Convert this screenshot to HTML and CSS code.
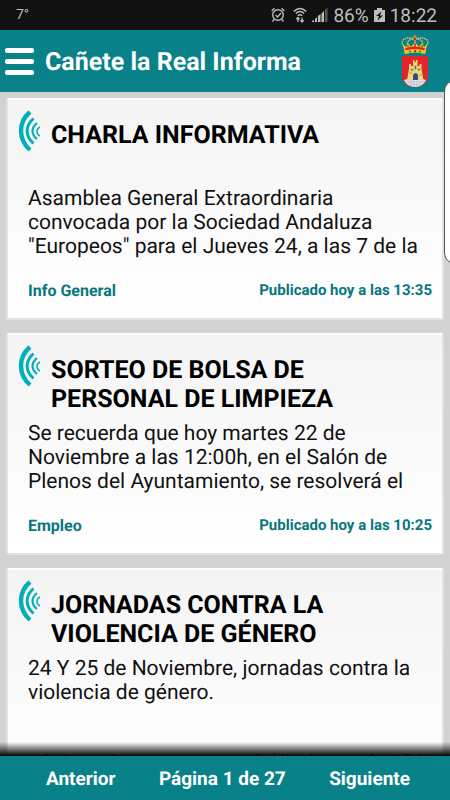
FILE: index.html
```html
<!DOCTYPE html>
<html lang="es">
<head>
    <meta charset="UTF-8">
    <meta name="viewport" content="width=device-width, initial-scale=1.0">
    <title>Cañete la Real Informa</title>
    <link rel="stylesheet" href="styles.css">
</head>
<body>

    <svg width="0" height="0" class="defs" aria-hidden="true">
        <symbol id="waves" viewBox="0 0 24 42">
            <g fill="none" stroke="#00afb9">
                <path d="M12 2C0 12 0 29 12 40" stroke-width="4.4"/>
                <path d="M15.500 8.500C7 16 7 26 15.500 33.500" stroke-width="3"/>
                <path d="M19 13C13 18 13 24 19 29" stroke-width="2.200"/>
                <path d="M22 17C18 19 18 24 22 26" stroke-width="1.500"/>
            </g>
        </symbol>
    </svg>

    <div class="status-bar">
        <span class="temperature">7°</span>
        <div class="status-icons">
            <svg class="icon-alarm" viewBox="0 0 14 16" width="14" height="16" fill="none" stroke="#bdbdbd">
                <circle cx="7" cy="8" r="5.300" stroke-width="1.400"/>
                <path d="M4.500 8l2 2 3.500-4" stroke-width="1.200"/>
                <path d="M.7 4L3.500 1.200M13.300 4L10.500 1.200M3 12.500L1.500 14.500M11 12.500l1.500 2" stroke-width="1.300"/>
            </svg>
            <svg class="icon-wifi" viewBox="0 0 14 16" width="14" height="16" fill="none" stroke="#bdbdbd">
                <path d="M.8 4.500Q7-1.500 13.200 4.500M2.800 6.600Q7 2.500 11.200 6.600M4.800 8.700Q7 6.600 9.200 8.700" stroke-width="1.400"/>
                <path d="M5 15v-4.500M3.300 12.300L5 10.500l1.500 1.800M9 10.500V15M7.500 13.200L9 15l1.700-1.800" stroke-width="1.300"/>
            </svg>
            <svg class="icon-signal" viewBox="0 0 16 16" width="16" height="16" fill="#bdbdbd">
                <path d="M0 15v-1l2-1v2zM3 15v-3l2-2v5zM6 15V9l2.500-2v8zM9.500 15V6.500L12 4v11z"/>
                <path d="M13 15V3l2.500-2.500V15z" fill="#555"/>
            </svg>
            <span>86%</span>
            <svg class="icon-battery" viewBox="0 0 11 16" width="11" height="16">
                <path d="M3 1h5v2h3v12H0V3h3z" fill="#bdbdbd"/>
                <path d="M7.500 4.500L2 9h3l-1.500 4.500L9 8.500H6z" fill="#111"/>
            </svg>
            <span>18:22</span>
        </div>
    </div>

    <header class="header">
        <button class="menu-btn" aria-label="Menú">
            <span></span>
            <span></span>
            <span></span>
        </button>
        <h1>Cañete la Real Informa</h1>
        <svg class="crest" viewBox="0 0 30 54" width="30" height="54" role="img" aria-label="Escudo">
            <path d="M15 1v5M13 3h4" stroke="#d8a52c" stroke-width="1.200"/>
            <circle cx="15" cy="5" r="1.500" fill="#d81f26"/>
            <path d="M4 12C-2 6 7 2 14 5M26 12C32 6 23 2 16 5M8 12C6 8 9 5 14 5M22 12C24 8 21 5 16 5M15 6v7" fill="none" stroke="#dfc779" stroke-width="1.300" stroke-dasharray="1.500 .7"/>
            <path d="M3 11l3 2 2-4 3 4 4-5 4 5 3-4 2 4 3-2-2 8q-10-3-20 0z" fill="#f6cf24"/>
            <path d="M5 14q10-3 20 0l-1 3q-9-3-18 0z" fill="#e2251f"/>
            <path d="M4 17q11-4 22 0l-1 3q-10-3-20 0z" fill="#f4c522"/>
            <path d="M8 11v2M22 11v2M15 9v4" stroke="#e2251f" stroke-width="1.500"/>
            <circle cx="10" cy="17.500" r="1" fill="#168851"/>
            <circle cx="15" cy="17" r="1.200" fill="#d92121"/>
            <circle cx="20" cy="17.500" r="1" fill="#168851"/>
            <path d="M2 22h26v20c0 7-6 11-13 11S2 49 2 42z" fill="#e52529"/>
            <path d="M4 46q11-5 22 0-3 7-11 7T4 46z" fill="#d9dde2"/>
            <path d="M7 48h16M10 50.500h10" stroke="#a8adb5" stroke-width=".8" stroke-dasharray="2 1"/>
            <path d="M7 46l2-11v-5h2v2h2v-6h1.500v2h1.500v-2h1.500v6h2v-2h2v5l2 11z" fill="#e9d97a"/>
            <path d="M10 35h11M13 32h5M9 39h3M19 41h3" stroke="#b7a03f" stroke-width=".8"/>
            <path d="M13 46v-5q2.500-4 5 0v5z" fill="#3a478f"/>
            <path d="M12 35v2M15.500 32v3M19 35v2" stroke="#555d78" stroke-width="1.200"/>
        </svg>
    </header>

    <main class="news">
        <article class="card">
            <div class="card-head">
                <svg class="waves" width="24" height="42" aria-hidden="true"><use href="#waves"/></svg>
                <h2>CHARLA INFORMATIVA</h2>
            </div>
            <p>Asamblea General Extraordinaria convocada por la Sociedad Andaluza "Europeos" para el Jueves 24, a las 7 de la</p>
            <div class="card-foot">
                <span class="category">Info General</span>
                <span class="date">Publicado hoy a las 13:35</span>
            </div>
        </article>
        <article class="card">
            <div class="card-head">
                <svg class="waves" width="24" height="42" aria-hidden="true"><use href="#waves"/></svg>
                <h2>SORTEO DE BOLSA DE PERSONAL DE LIMPIEZA</h2>
            </div>
            <p>Se recuerda que hoy martes 22 de Noviembre a las 12:00h, en el Salón de Plenos del Ayuntamiento, se resolverá el</p>
            <div class="card-foot">
                <span class="category">Empleo</span>
                <span class="date">Publicado hoy a las 10:25</span>
            </div>
        </article>
        <article class="card">
            <div class="card-head">
                <svg class="waves" width="24" height="42" aria-hidden="true"><use href="#waves"/></svg>
                <h2>JORNADAS CONTRA LA VIOLENCIA DE GÉNERO</h2>
            </div>
            <p>24 Y 25 de Noviembre, jornadas contra la violencia de género.</p>
            <div class="card-foot">
                <span class="category">Info General</span>
                <span class="date">Publicado ayer a las 17:24</span>
            </div>
        </article>
    </main>

    <div class="edge-handle"></div>

    <nav class="pager">
        <a href="#">Anterior</a>
        <span>Página 1 de 27</span>
        <a href="#">Siguiente</a>
    </nav>

</body>
</html>
```

FILE: styles.css
```css
* {
    box-sizing: border-box;
}
body {
    font-family: Roboto, "Liberation Sans", sans-serif;
    text-rendering: geometricPrecision;
    background-color: #d2d2d2;
    display: flex;
    flex-direction: column;
    height: 100vh;
    margin: 0;
    overflow: hidden;
    position: relative;
}
.defs {
    position: absolute;
}
.status-bar {
    display: flex;
    justify-content: space-between;
    align-items: center;
    flex: none;
    height: 30px;
    padding: 0 13px 0 16px;
    background-color: #111111;
    color: #bdbdbd;
}
.temperature {
    font-size: 14px;
}
.status-icons {
    display: flex;
    align-items: center;
    gap: 5px;
    font-size: 19px;
}
.icon-alarm {
    margin-right: 3px;
}
.header {
    display: flex;
    align-items: center;
    flex: none;
    height: 62px;
    padding: 0 20px 0 5px;
    background-color: #088288;
    color: #ffffff;
}
.menu-btn {
    display: flex;
    flex-direction: column;
    gap: 6px;
    width: 29px;
    padding: 0;
    border: none;
    background: none;
    cursor: pointer;
}
.menu-btn span {
    height: 5px;
    border-radius: 2px;
    background-color: #ffffff;
}
.header h1 {
    flex: 1;
    margin: 4px 0 0 11px;
    font-size: 25px;
    line-height: 30px;
}
.news {
    display: flex;
    flex-direction: column;
    gap: 13px;
    flex: 1;
    min-height: 0;
    padding: 6px;
    overflow: hidden;
}
.card {
    flex: none;
    padding: 10px 10px 18px 20px;
    border: 2px solid #e2e2e2;
    border-top-color: #ffffff;
    border-radius: 3px;
    background: linear-gradient(#f4f4f4, #ffffff);
}
.card-head {
    display: flex;
    align-items: flex-start;
    gap: 9px;
    min-height: 75px;
    margin-left: -10px;
}
.waves {
    flex: none;
}
.card h2 {
    margin: 11px 0 0;
    font-size: 25px;
    line-height: 29px;
    color: #000000;
}
.card p {
    height: 72px;
    margin: 2px 0 21px;
    overflow: hidden;
    font-size: 21px;
    line-height: 24px;
    color: #111111;
}
.card-foot {
    display: flex;
    justify-content: space-between;
    align-items: center;
    height: 20px;
    font-weight: bold;
    color: #08777d;
}
.category {
    font-size: 16px;
}
.date {
    font-size: 15px;
}
.edge-handle {
    position: absolute;
    top: 80px;
    right: -16px;
    width: 22px;
    height: 184px;
    border: 1px solid #555555;
    border-radius: 11px;
    background-color: #ffffff;
}
.pager {
    display: flex;
    justify-content: space-between;
    align-items: center;
    flex: none;
    position: relative;
    height: 44px;
    padding: 0 40px 0 46px;
    background-color: #088288;
    color: #ffffff;
    font-size: 19px;
    font-weight: bold;
}
.pager::before {
    content: "";
    position: absolute;
    left: 0;
    right: 0;
    bottom: 100%;
    height: 14px;
    background: linear-gradient(rgba(0, 0, 0, 0), #000000);
}
.pager a {
    color: #ffffff;
    text-decoration: none;
}
```
